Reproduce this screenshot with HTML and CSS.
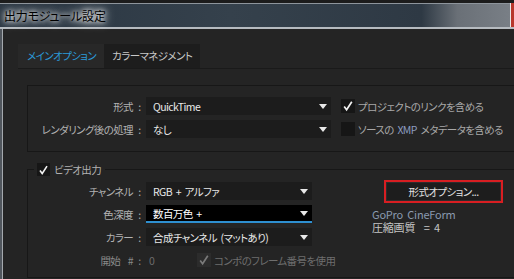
FILE: index.html
```html
<!DOCTYPE html>
<html lang="ja">
<head>
    <meta charset="UTF-8">
    <title>出力モジュール設定</title>
    <link rel="stylesheet" href="styles.css">
</head>
<body>
    <div class="window">
        <div class="titlebar">
            <span class="title">出力モジュール設定</span>
            <span class="close"></span>
        </div>

        <div class="body">
            <div class="tabs">
                <div class="tab active">メインオプション</div>
                <div class="tab">カラーマネジメント</div>
            </div>

            <div class="panel">
                <div class="group">
                    <div class="row">
                        <span class="label">形式</span><span class="colon">:</span>
                        <div class="select wide">QuickTime<span class="arrow"></span></div>
                        <span class="check">
                            <svg class="tick" viewBox="0 0 14 14"><path d="M3.2 7.6 5.6 10.8 10.8 2.8" /></svg>
                        </span>
                        <span class="check-text">プロジェクトのリンクを含める</span>
                    </div>
                    <div class="row">
                        <span class="label">レンダリング後の処理</span><span class="colon">:</span>
                        <div class="select wide">なし<span class="arrow"></span></div>
                        <span class="check"></span>
                        <span class="check-text">ソースの <span class="xmp">XMP</span> メタデータを含める</span>
                    </div>
                </div>

                <fieldset class="group video">
                    <legend class="legend">
                        <span class="check small">
                            <svg class="tick" viewBox="0 0 14 14"><path d="M3.2 7.6 5.6 10.8 10.8 2.8" /></svg>
                        </span>
                        <span>ビデオ出力</span>
                    </legend>

                    <div class="video-body">
                        <div class="video-rows">
                            <div class="row">
                                <span class="label">チャンネル</span><span class="colon">:</span>
                                <div class="select">RGB + アルファ<span class="arrow"></span></div>
                            </div>
                            <div class="row">
                                <span class="label">色深度</span><span class="colon">:</span>
                                <div class="select focused">数百万色 +<span class="arrow"></span></div>
                            </div>
                            <div class="row">
                                <span class="label">カラー</span><span class="colon">:</span>
                                <div class="select">合成チャンネル (マットあり)<span class="arrow"></span></div>
                            </div>
                            <div class="row dim">
                                <span class="label">開始 &nbsp;#</span><span class="colon">:</span>
                                <span class="start-value">0</span>
                                <span class="check disabled">
                                    <svg class="tick" viewBox="0 0 14 14"><path d="M3.2 7.6 5.6 10.8 10.8 2.8" /></svg>
                                </span>
                                <span class="check-text">コンポのフレーム番号を使用</span>
                            </div>
                        </div>

                        <div class="video-side">
                            <button class="format-button">形式オプション...</button>
                            <div class="codec">
                                <div class="codec-name">GoPro CineForm</div>
                                <div class="codec-quality">圧縮画質 &nbsp;= 4</div>
                            </div>
                        </div>
                    </div>
                </fieldset>
            </div>
        </div>
    </div>
</body>
</html>
```

FILE: styles.css
```css
* {
    box-sizing: border-box;
}

body {
    margin: 0;
    width: 514px;
    height: 279px;
    overflow: hidden;
    background-color: #242424;
    font-family: "Noto Sans CJK JP", sans-serif;
    font-size: 10.5px;
    letter-spacing: -0.6px;
    word-spacing: 2px;
    font-feature-settings: "palt";
    color: #b2b2b2;
}

.window {
    height: 279px;
    background-color: #50565d;
}

.titlebar {
    height: 29px;
    display: flex;
    align-items: center;
    justify-content: space-between;
    border-top: 3px solid #1c1c1c;
    border-bottom: 2px solid #b6bbc0;
    background: linear-gradient(to right, #2a3642 0%, #35414c 45%, #2e3944 82%, #6a7077 89%, #7a8087 100%);
    box-shadow: inset 0 1px 0 #8e959c;
}

.title {
    padding: 0 10px 0 4px;
    font-size: 12px;
    letter-spacing: -0.2px;
    color: #000;
    text-shadow: 0 0 4px #fff, 0 0 8px #fff, 0 0 12px rgba(230, 236, 242, 0.9);
}

.close {
    width: 4px;
    height: 24px;
    background-color: #b8372c;
    border-left: 1px solid #e8e8e8;
}

.body {
    height: 250px;
    margin-left: 2px;
    padding: 15px 0 0 15px;
    background-color: #242424;
    border-left: 1px solid #a4a9ae;
}

.tabs {
    display: flex;
    height: 25px;
    border-bottom: 1px solid #1a1a1a;
}

.tab {
    height: 24px;
    line-height: 24px;
    padding: 0 8px;
    background-color: #1d1d1d;
    color: #c8c8c8;
}

.tab.active {
    padding-left: 9px;
    background-color: #282828;
    color: #2b9ad8;
}

.panel {
    padding: 16px 0 0 9px;
}

.group {
    width: 520px;
    padding: 11px 0 13px 0;
    border: 1px solid #171717;
    border-right: none;
}

.row {
    display: flex;
    align-items: center;
    height: 18px;
    margin-bottom: 5px;
}

.row:last-child {
    margin-bottom: 0;
}

.label {
    flex: none;
    width: 105px;
    text-align: right;
    white-space: nowrap;
}

.colon {
    flex: none;
    width: 13px;
    text-align: center;
}

.select {
    flex: none;
    width: 166px;
    height: 18px;
    display: flex;
    align-items: center;
    justify-content: space-between;
    padding: 0 4px 0 7px;
    background-color: #1c1c1c;
    color: #e8e8e8;
    white-space: pre;
}

.select.wide {
    width: 185px;
}

.select.focused {
    background-color: #000;
    border-bottom: 2px solid #2e8fd0;
    color: #fff;
}

.arrow {
    width: 0;
    height: 0;
    border-left: 4.5px solid transparent;
    border-right: 4.5px solid transparent;
    border-top: 5px solid #e8e8e8;
}

.check {
    flex: none;
    width: 14px;
    height: 14px;
    margin: 0 3px 0 10px;
    background-color: #161616;
    display: flex;
}

.tick {
    width: 14px;
    height: 14px;
}

.tick path {
    fill: none;
    stroke: #f2f2f2;
    stroke-width: 1.7;
}

.check-text {
    white-space: nowrap;
    color: #a8a8a8;
}

.xmp {
    color: #8c9cc0;
}

.video {
    margin: 10px 0 0 0;
    padding: 6px 0 8px 0;
    min-width: 0;
}

.legend {
    display: flex;
    align-items: center;
    margin-left: 6px;
    padding: 0 4px 0 3px;
    height: 14px;
}

.check.small {
    width: 13px;
    height: 13px;
    margin: 0 4px 0 0;
}

.video-body {
    display: flex;
}

.video-rows {
    flex: none;
    width: 284px;
}

.video-side {
    flex: none;
    margin: -2px 0 0 60px;
}

.format-button {
    display: block;
    width: 119px;
    height: 23px;
    margin-left: 12px;
    padding: 0;
    background-color: #1d1d1d;
    border: 2px solid #d81e22;
    box-shadow: inset 0 0 0 1px #2c2c2c;
    color: #e2e2e2;
    font-family: inherit;
    font-size: 10.5px;
    letter-spacing: -0.6px;
    font-feature-settings: "palt";
}

.codec {
    margin-top: 5px;
    line-height: 13px;
    font-size: 11px;
    letter-spacing: -0.2px;
}

.codec-name {
    color: #8a9ab0;
}

.codec-quality {
    color: #c4c4c4;
}

.row.dim .label,
.row.dim .colon {
    color: #8a8a8a;
}

.start-value {
    flex: none;
    width: 51px;
    padding-left: 3px;
    color: #6c6c6c;
}

.check.disabled {
    margin-left: 0;
    background-color: #2c2c2c;
}

.check.disabled .tick path {
    stroke: #7a7a7a;
}

.row.dim .check-text {
    color: #6e6e6e;
}
```
